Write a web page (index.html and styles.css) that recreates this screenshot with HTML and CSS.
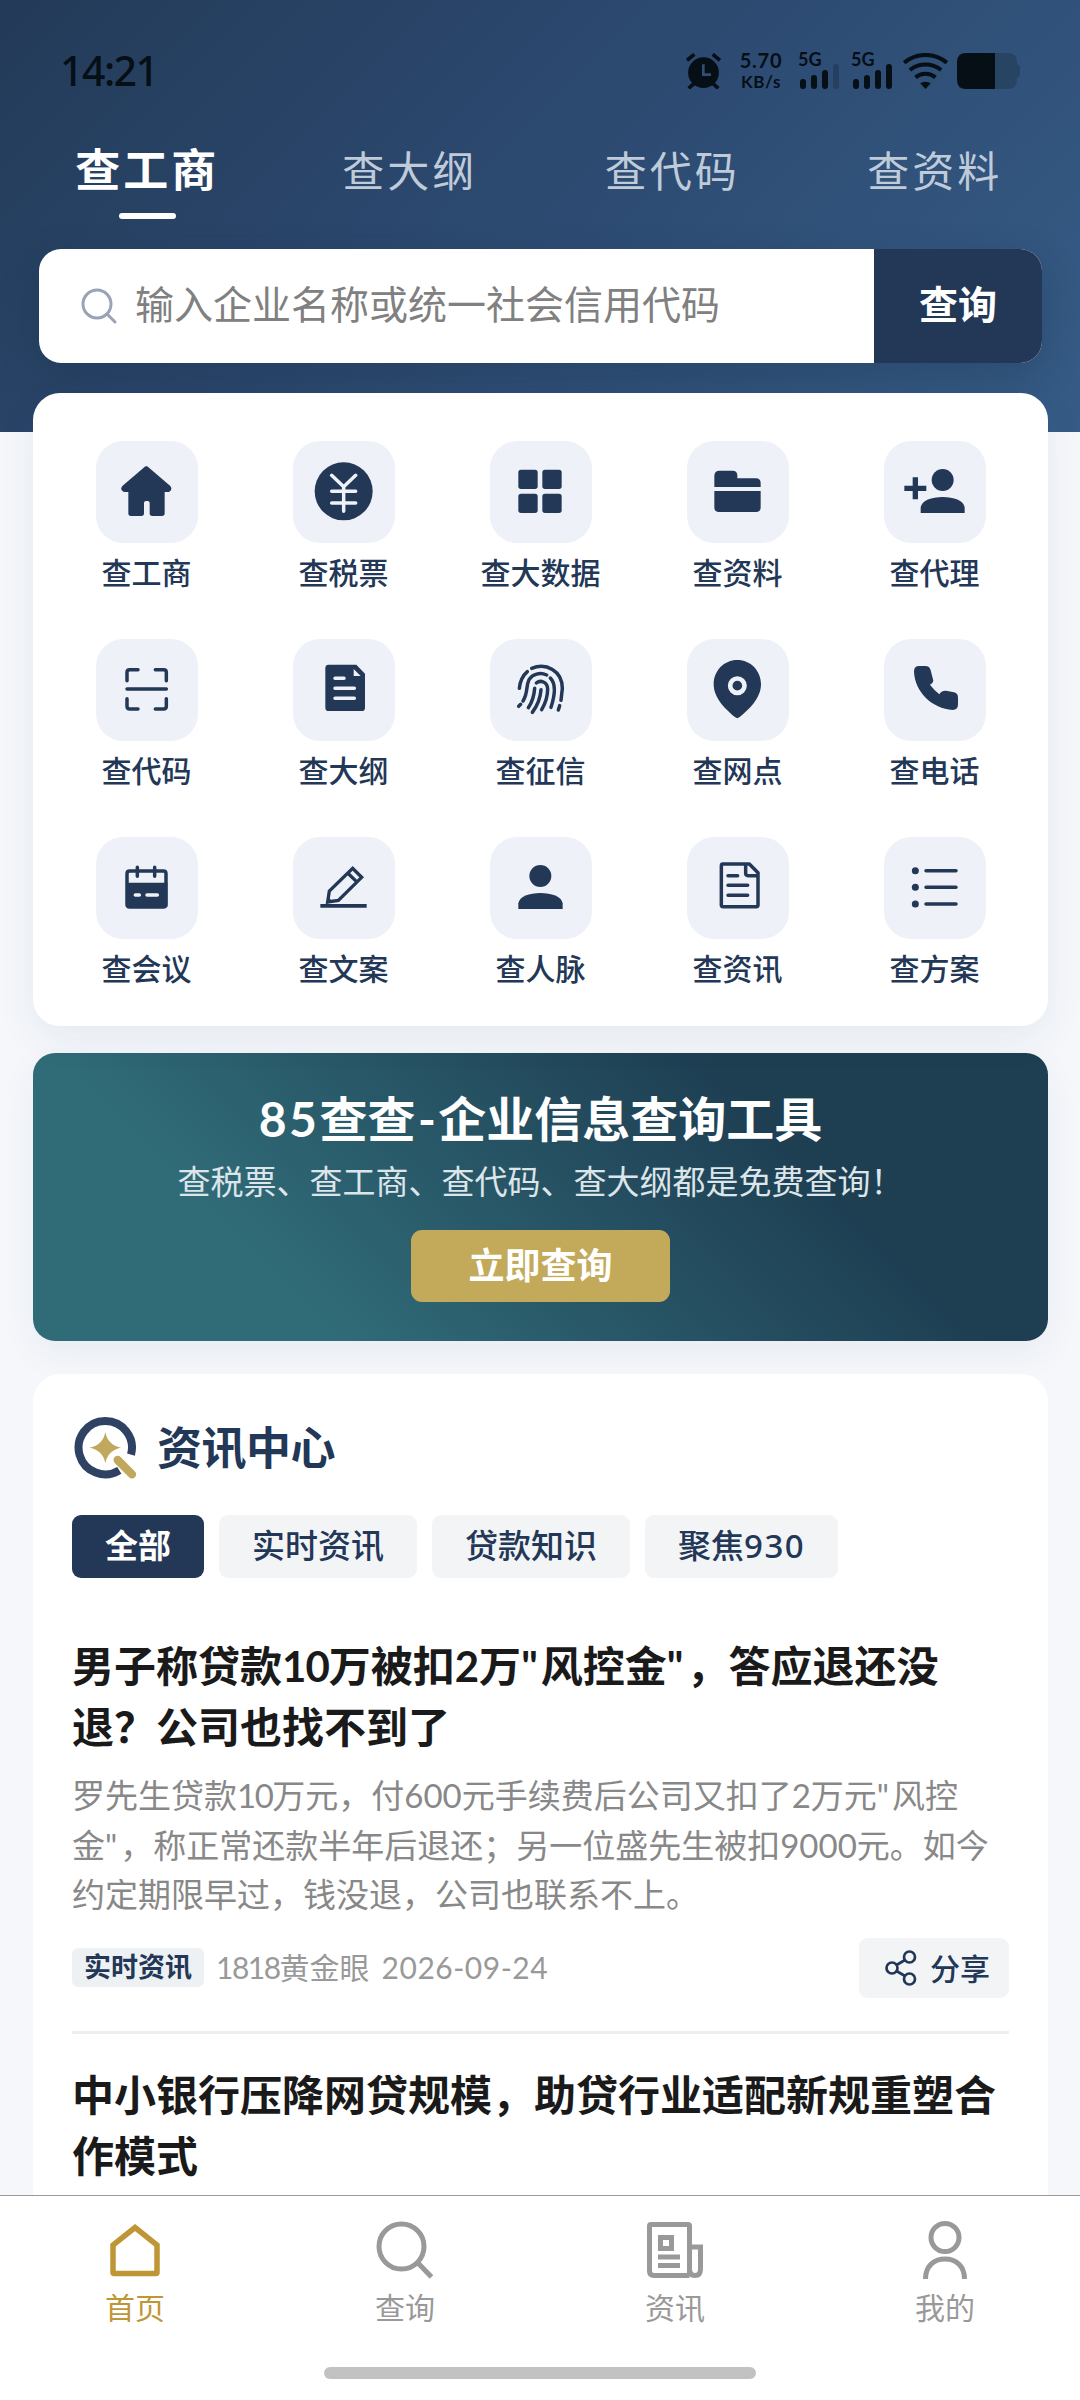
FILE: index.html
```html
<!DOCTYPE html>
<html lang="zh-CN">
<head>
<meta charset="utf-8">
<title>85查查</title>
<link rel="stylesheet" href="styles.css">
</head>
<body>
<div class="app">
  <main class="content">
    <header class="hero">
      <div class="status">
        <span class="clock">14:21</span>
        <div class="status-icons">
          <svg class="alarm" viewBox="0 0 105 108"><circle cx="52.500" cy="59" r="46" fill="currentColor"/><g fill="none" stroke="currentColor" stroke-width="11"><path d="M3 22 25 4M102 22 80 4M8 106 24 92M97 106 81 92"/></g><path d="M52 34V65H75" fill="none" stroke="#2f5075" stroke-width="8"/></svg>
          <div class="speed"><span class="speed-num">5.70</span><span class="speed-unit">KB/s</span></div>
          <div class="signal"><span>5G</span><svg viewBox="0 0 39 25"><rect y="15" width="6" height="10" rx="3"/><rect x="11" y="11" width="6" height="14" rx="3"/><rect x="22" y="6" width="6" height="19" rx="3"/><rect x="33" y="0" width="6" height="25" rx="3" opacity=".22"/></svg></div>
          <div class="signal second"><span>5G</span><svg viewBox="0 0 39 25"><rect y="15" width="6" height="10" rx="3"/><rect x="11" y="11" width="6" height="14" rx="3"/><rect x="22" y="6" width="6" height="19" rx="3"/><rect x="33" y="0" width="6" height="25" rx="3"/></svg></div>
          <svg class="wifi" viewBox="0 0 134 108"><g fill="none" stroke="currentColor" stroke-width="12"><path d="M3 29C40-2 94-2 131 29"/><path d="M20 51C48 29 86 29 114 51"/><path d="M37 73C55 59 79 59 97 73"/></g><path d="M67 108 51 91Q67 82 83 91z" fill="currentColor"/></svg>
          <svg class="battery" viewBox="0 0 63 36"><path d="M38 0H51Q60 0 60 9V11L63 13V23L60 25V27Q60 36 51 36H38z" fill="#274463"/><path d="M38 0H9Q0 0 0 9V27Q0 36 9 36H38z" fill="currentColor"/></svg>
        </div>
      </div>
      <nav class="tabs">
        <span class="tab active">查工商</span>
        <span class="tab">查大纲</span>
        <span class="tab">查代码</span>
        <span class="tab">查资料</span>
      </nav>
      <div class="search">
        <svg class="search-icon" viewBox="0 0 36 36" fill="none" stroke="#9aa3b5" stroke-width="3"><circle cx="16" cy="16" r="14"/><path d="M26 26 34 34" stroke-linecap="round"/></svg>
        <span class="placeholder">输入企业名称或统一社会信用代码</span>
        <span class="search-btn">查询</span>
      </div>
    </header>

    <section class="grid">
      <div class="cell"><svg class="ico" viewBox="0 0 306 306"><path fill="currentColor" d="M143 80Q151 72 159 80L223 135Q231 146 219 153H206V217q0 8-8 8H169q-8 0-8-8V186q0-6-6-6h-5q-6 0-6 6V217q0 8-8 8H105q-8 0-8-8V153H84Q70 147 79 135z"/></svg><span>查工商</span></div>
      <div class="cell"><svg class="ico" viewBox="0 0 306 306"><circle cx="152" cy="151" r="87" fill="currentColor"/><path class="line light" d="M116 103 152 137 188 103M116 151H188M116 186H188M152 137V211"/></svg><span>查税票</span></div>
      <div class="cell"><svg class="ico" viewBox="0 0 306 306" fill="currentColor"><rect x="85" y="86" width="58" height="58" rx="8"/><rect x="157" y="86" width="58" height="58" rx="8"/><rect x="85" y="158" width="58" height="58" rx="8"/><rect x="157" y="158" width="58" height="58" rx="8"/></svg><span>查大数据</span></div>
      <div class="cell"><svg class="ico" viewBox="0 0 306 306" fill="currentColor"><path d="M82 138V105q0-16 16-16H137q14 0 14 14V112H206q15 0 15 15V138zM82 150H221V199q0 14-14 14H96q-14 0-14-14z"/></svg><span>查资料</span></div>
      <div class="cell"><svg class="ico" viewBox="0 0 306 306" fill="currentColor"><circle cx="176" cy="117" r="33"/><path d="M110 216V199C113 178 143 168 176 168S239 178 242 199V216zM86 109H102V134H127V150H102V175H86V150H61V134H86z"/></svg><span>查代理</span></div>

      <div class="cell"><svg class="ico" viewBox="0 0 306 306"><path class="line" d="M93 125V100Q93 92 101 92H126M178 92H203Q211 92 211 100V125M93 179V202Q93 210 101 210H126M178 210H203Q211 210 211 202V179M93 150H211"/></svg><span>查代码</span></div>
      <div class="cell"><svg class="ico" viewBox="0 0 306 306"><path fill="currentColor" d="M107 77H190L216 104V206Q216 216 206 216H107Q97 216 97 206V87Q97 77 107 77z"/><path d="M182 90 203 111H182z" fill="#eef2f8"/><path class="line light" d="M126 118H153M126 148H184M126 178H184"/></svg><span>查大纲</span></div>
      <div class="cell"><svg class="ico" viewBox="0 0 306 306"><path class="line" d="M125 88C168 70 217 95 217 148L213 184M209 200 205 213M112 98C98 110 90 130 88 148M92 196 86 202M99 186C115 160 107 142 117 122C127 105 150 99 170 108M181 117C198 134 196 165 183 205M134 148C132 175 126 190 115 206M139 132C151 122 172 128 173 150C173 175 165 195 155 212M153 152C151 180 140 203 127 220"/></svg><span>查征信</span></div>
      <div class="cell"><svg class="ico" viewBox="0 0 306 306"><path fill="currentColor" d="M151 63C111 63 80 95 80 136C80 178 118 214 145 235Q151 240 157 235C184 214 222 178 222 136C222 95 191 63 151 63z"/><circle cx="151" cy="140" r="21.500" fill="none" stroke="#eef2f8" stroke-width="14"/></svg><span>查网点</span></div>
      <div class="cell"><svg class="ico" viewBox="0 0 306 306"><path fill="currentColor" d="M90 97Q90 81 106 81H124Q137 81 140 94L148 125Q147 133 138 137Q151 154 166 166Q172 154 186 155L210 160Q222 163 222 176V196Q222 213 206 213C145 209 92 160 90 97z"/></svg><span>查电话</span></div>

      <div class="cell"><svg class="ico" viewBox="0 0 306 306"><path class="line" d="M101 102H202Q210 102 210 110V202Q210 210 202 210H101Q93 210 93 202V110Q93 102 101 102zM124 91V118M176 91V118"/><path fill="currentColor" d="M90 137H214V210H90z"/><path class="line light" d="M118 174H130M153 174H184"/></svg><span>查会议</span></div>
      <div class="cell"><svg class="ico" viewBox="0 0 306 306"><path d="M104 195 109 162 179 94 206 121 136 190zM164 108 193 136" fill="none" stroke="currentColor" stroke-width="10"/><path fill="currentColor" d="M82 201H221V212H82zM100 201 103 180 120 193z"/></svg><span>查文案</span></div>
      <div class="cell"><svg class="ico" viewBox="0 0 306 306" fill="currentColor"><circle cx="151" cy="117" r="33"/><path d="M85 216V199C88 178 118 168 151 168S215 178 218 199V216z"/></svg><span>查人脉</span></div>
      <div class="cell"><svg class="ico" viewBox="0 0 306 306"><path class="line" d="M108 81H187L213 107V204Q213 209 208 209H108Q103 209 103 204V86Q103 81 108 81zM176 83V109Q176 116 183 116H211M123 116H152M123 145H182M123 175H182"/></svg><span>查资讯</span></div>
      <div class="cell"><svg class="ico" viewBox="0 0 306 306"><g fill="currentColor"><circle cx="94" cy="101" r="10.500"/><circle cx="94" cy="151" r="10.500"/><circle cx="94" cy="201" r="10.500"/></g><path class="line" d="M126 101H216M126 151H216M126 201H216"/></svg><span>查方案</span></div>
    </section>

    <section class="banner">
      <h2><span class="lead">85</span>查查<span class="dash">-</span>企业信息查询工具</h2>
      <p>查税票、查工商、查代码、查大纲都是免费查询！</p>
      <span class="banner-btn">立即查询</span>
    </section>

    <section class="news">
      <div class="news-head">
        <svg viewBox="0 0 198 198"><path d="M142 166A80 80 0 1 1 177 119" fill="none" stroke="#2f4264" stroke-width="24"/><path d="M137 135 180 178" stroke="#c0a85c" stroke-width="25" stroke-linecap="round"/><path d="M100 51Q107 90 147 98Q107 106 100 145Q93 106 53 98Q93 90 100 51z" fill="#c0a85c"/></svg>
        <h3>资讯中心</h3>
      </div>
      <div class="chips">
        <span class="chip on">全部</span><span class="chip">实时资讯</span><span class="chip">贷款知识</span><span class="chip">聚焦<span class="chip-num">930</span></span>
      </div>
      <article class="item">
        <h4>男子称贷款<span class="num">10</span>万被扣2万<span class="quote">"</span>风控金<span class="quote">"</span>，答应退还没<br>退？公司也找不到了</h4>
        <p>罗先生贷款<span class="num">10</span>万元，付600元手续费后公司又扣了2万元<span class="quote">"</span>风控<br>金<span class="quote">"</span>，称正常还款半年后退还；另一位盛先生被扣9000元。如今<br>约定期限早过，钱没退，公司也联系不上。</p>
        <div class="foot">
          <span class="tag">实时资讯</span>
          <span class="meta"><span class="num">1818</span>黄金眼</span>
          <span class="meta date">2026-09-24</span>
          <span class="share"><svg viewBox="0 0 32 36" fill="none" stroke="currentColor" stroke-width="2.700"><circle cx="7" cy="18" r="5.500"/><circle cx="24.500" cy="7" r="5.500"/><circle cx="24.500" cy="29" r="5.500"/><path d="M11.500 15 20 10M11.500 21 20 26"/></svg>分享</span>
        </div>
      </article>
      <article class="item">
        <h4>中小银行压降网贷规模，助贷行业适配新规重塑合<br>作模式</h4>
      </article>
    </section>
  </main>

  <footer class="tabbar">
    <div class="bar-items">
      <div class="bar-item current"><svg viewBox="0 0 60 60" fill="none" stroke="currentColor" stroke-width="5.500"><path d="M30 7.500 52 25V52.500Q52 53.500 51 53.500H9Q8 53.500 8 52.500V25z"/></svg><span>首页</span></div>
      <div class="bar-item"><svg viewBox="0 0 60 60" fill="none" stroke="currentColor" stroke-width="5"><circle cx="26.500" cy="26.500" r="22.500"/><path d="M43 43 56.500 57"/></svg><span>查询</span></div>
      <div class="bar-item"><svg viewBox="0 0 60 60" fill="none" stroke="currentColor" stroke-width="5"><path d="M44.500 55.500H9Q4.500 55.500 4.500 51V6Q4.500 4.500 6 4.500H43Q44.500 4.500 44.500 6V55.500M44.500 27H55.500V49Q55.500 55.500 50 55.500T44.500 49"/><path d="M15.500 17.500H26.500V28.500H15.500zM13 37H35M13 45.500H35"/></svg><span>资讯</span></div>
      <div class="bar-item"><svg viewBox="0 0 60 60" fill="none" stroke="currentColor" stroke-width="5"><circle cx="30" cy="17.500" r="14"/><path d="M10.500 59C10.500 46 19 39 30 39S49.500 46 49.500 59"/></svg><span>我的</span></div>
    </div>
    <div class="home-indicator"></div>
  </footer>
</div>
</body>
</html>
```
FILE: styles.css
```css
* { box-sizing: border-box; margin: 0; padding: 0; }
body {
  width: 1080px;
  background: #f5f7fb;
  font-family: Lato, "Noto Sans CJK SC", sans-serif;
  color: #233757;
  white-space: nowrap;
}
h2, h3, h4 { font-weight: 700; }
svg { display: block; flex: none; }
.app { display: flex; flex-direction: column; height: 2400px; overflow: hidden; }
.content { flex: 1; min-height: 0; overflow: hidden; }

/* header */
.hero {
  height: 432px;
  padding-top: 28px;
  background: linear-gradient(135deg, #233b58 0%, #2b476d 40%, #365c86 100%);
}
.status {
  height: 86px;
  padding: 0 60px;
  display: flex;
  align-items: center;
  justify-content: space-between;
  color: #060e16;
}
.clock { font-family: "Noto Sans", sans-serif; font-size: 41px; line-height: 50px; font-weight: 500; letter-spacing: -1.500px; margin-top: -3px; }
.status-icons { display: flex; align-items: center; height: 36px; }
.alarm { width: 35px; height: 36px; }
.speed { display: flex; flex-direction: column; align-items: center; width: 46px; height: 36px; margin-left: 17px; font-weight: 700; }
.speed-num { font-size: 20px; line-height: 15px; letter-spacing: .8px; }
.speed-unit { font-size: 17px; line-height: 17px; margin-top: 5px; letter-spacing: .6px; }
.signal { display: flex; flex-direction: column; width: 41px; height: 36px; margin-left: 14px; font-size: 18px; font-weight: 700; line-height: 13px; }
.signal svg { width: 39px; height: 25px; margin: -2px 0 0 2px; fill: currentColor; }
.signal.second { margin-left: 12px; }
.wifi { width: 45px; height: 36px; margin-left: 11px; }
.battery { width: 63px; height: 36px; margin-left: 9px; }

.tabs { display: flex; padding: 0 14px 0 16px; margin-top: 27px; }
.tab {
  flex: 1;
  display: flex;
  flex-direction: column;
  align-items: center;
  height: 78px;
  font-size: 42px;
  line-height: 60px;
  letter-spacing: 3px;
  color: #bfcbd9;
}
.tab.active { font-size: 45px; line-height: 58px; font-weight: 700; color: #fff; }
.tab.active::after { content: ""; width: 57px; height: 6px; margin-top: 14px; border-radius: 3px; background: #fff; }

.search {
  display: flex;
  align-items: center;
  height: 114px;
  margin: 30px 38px 0 39px;
  padding-left: 42px;
  border-radius: 22px;
  overflow: hidden;
  background: #fff;
  box-shadow: 0 12px 36px rgba(20, 40, 60, .25);
  font-size: 39px;
}
.search-icon { width: 36px; height: 36px; }
.placeholder { flex: 1; margin-left: 18px; line-height: 54px; padding-bottom: 4px; color: #808080; }
.search-btn {
  width: 168px;
  height: 114px;
  line-height: 111px;
  text-align: center;
  font-weight: 700;
  color: #fff;
  background: #233757;
}

/* shortcuts */
.grid {
  position: relative;
  display: grid;
  grid-template-columns: repeat(5, 197px);
  grid-auto-rows: 198px;
  height: 633px;
  margin: -39px 32px 0 33px;
  padding: 48px 15px 0;
  border-radius: 27px;
  background: #fff;
  box-shadow: 0 12px 40px rgba(30, 50, 80, .07);
}
.cell { display: flex; flex-direction: column; align-items: center; font-size: 30px; font-weight: 500; line-height: 40px; }
.cell span { margin-top: 9px; }
.ico { width: 102px; height: 102px; border-radius: 27px; background: #eef2f8; }
.line { fill: none; stroke: currentColor; stroke-width: 10.500; stroke-linecap: round; stroke-linejoin: round; }
.light { stroke: #eef2f8; }

/* banner */
.banner {
  display: flex;
  flex-direction: column;
  align-items: center;
  height: 288px;
  margin: 27px 32px 0 33px;
  padding-top: 36px;
  border-radius: 22px;
  color: #fff;
  background: linear-gradient(45deg, #306b78 24%, #1e3e52 74%);
  box-shadow: 0 12px 36px rgba(30, 50, 80, .06);
}
.banner h2 { font-size: 48px; line-height: 60px; }
.lead { letter-spacing: 2.500px; }
.dash { padding: 0 2.500px; }
.banner p { margin-top: 8px; font-size: 33px; line-height: 48px; color: #dce5e9; }
.banner-btn {
  width: 259px;
  height: 72px;
  margin-top: 25px;
  border-radius: 11px;
  background: #c3a95a;
  font-size: 36px;
  font-weight: 700;
  line-height: 70px;
  text-align: center;
}

/* news */
.news { margin: 33px 32px 0 33px; padding: 41px 39px 0; border-radius: 27px; height: 900px; background: #fff; }
.news-head { display: flex; align-items: center; gap: 19px; height: 66px; }
.news-head svg { width: 66px; height: 66px; }
.news-head h3 { font-size: 45px; line-height: 60px; letter-spacing: -.500px; }
.chips { display: flex; gap: 15px; margin-top: 34px; }
.chip { height: 63px; padding: 0 33px; border-radius: 9px; background: #f2f4f6; font-size: 33px; font-weight: 500; line-height: 60px; }
.chip.on { background: #233757; color: #fff; font-weight: 700; }
.chip-num { font-family: "Noto Sans", sans-serif; letter-spacing: 1.500px; }
.item { margin-top: 58px; }
.item h4 { font-size: 42px; line-height: 61px; color: #1a1a1a; }
.item p { margin-top: 13px; font-size: 33px; line-height: 49.500px; color: #888; }
.num { letter-spacing: -1.500px; }
.quote { letter-spacing: 3px; }
h4 .num { letter-spacing: -1px; }
.foot { display: flex; align-items: center; height: 60px; margin-top: 18px; font-size: 30px; line-height: 58px; color: #999; }
.tag { width: 132px; height: 39px; margin-right: 12px; border-radius: 6px; background: #eef1f4; color: #233757; font-size: 27px; font-weight: 700; line-height: 38px; text-align: center; }
.meta { height: 60px; margin-right: 12px; }
.date { letter-spacing: .500px; }
.share { display: flex; align-items: center; gap: 13px; width: 150px; height: 60px; margin-left: auto; padding-left: 26px; border-radius: 9px; background: #f2f4f6; color: #233757; font-weight: 500; }
.share svg { width: 32px; height: 36px; }
.item + .item { margin-top: 33px; padding-top: 31px; border-top: 3px solid #eee; }

/* bottom bar */
.tabbar { flex: none; height: 205px; border-top: 1px solid #999; background: #fff; }
.bar-items { display: flex; height: 171px; padding-top: 24px; }
.bar-item { flex: 1; display: flex; flex-direction: column; align-items: center; font-size: 30px; line-height: 40px; color: #999; }
.bar-item svg { width: 60px; height: 60px; }
.bar-item span { margin-top: 7px; }
.current { color: #bf9636; }
.home-indicator { width: 432px; height: 12px; margin: 0 auto; border-radius: 6px; background: #c2c2c2; }
```
